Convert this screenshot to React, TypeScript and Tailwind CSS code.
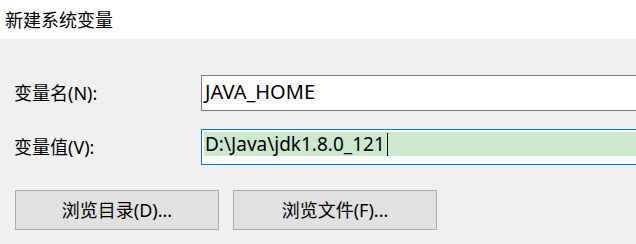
import React from "react";

const font = { fontFamily: '"Noto Sans", "Noto Sans CJK SC", sans-serif' };

export default function App() {
  return (
    <div
      className="w-[636px] h-[244px] overflow-hidden flex flex-col bg-[#f0f0f0] text-black"
      style={font}
    >
      <div className="h-[39px] shrink-0 bg-white pl-[5px] flex items-center text-[18px] leading-none">
        新建系统变量
      </div>
      <div className="flex flex-col pt-[36px]">
        <div className="flex items-center h-[36px]">
          <div className="w-[201px] shrink-0 pl-[14px] text-[18px] leading-none">变量名(N):</div>
          <div className="w-[460px] shrink-0 h-[36px] border border-[#7a7a7a] bg-white pl-[3px] pb-[2px] flex items-center text-[20px] leading-none">
            JAVA_HOME
          </div>
        </div>
        <div className="flex items-center h-[36px] mt-[18px]">
          <div className="w-[201px] shrink-0 pl-[14px] text-[18px] leading-none">变量值(V):</div>
          <div className="w-[460px] shrink-0 h-[36px] border border-[#0078d7] bg-white pl-[2px] pt-[2px]">
            <div className="h-[24px] bg-[#cce8cf] pl-[1px] flex items-center text-[19px] leading-none">
              <span>D:\Java\jdk1.8.0_121</span>
              <span className="ml-[2px] w-px h-[23px] bg-black" />
            </div>
          </div>
        </div>
        <div className="flex mt-[25px] pl-[15px] gap-[14px]">
          <div className="w-[204px] h-[40px] bg-[#e1e1e1] border border-[#adadad] flex items-center justify-center text-[18px] leading-none">
            浏览目录(D)...
          </div>
          <div className="w-[204px] h-[40px] bg-[#e1e1e1] border border-[#adadad] flex items-center justify-center text-[18px] leading-none">
            浏览文件(F)...
          </div>
        </div>
      </div>
    </div>
  );
}
